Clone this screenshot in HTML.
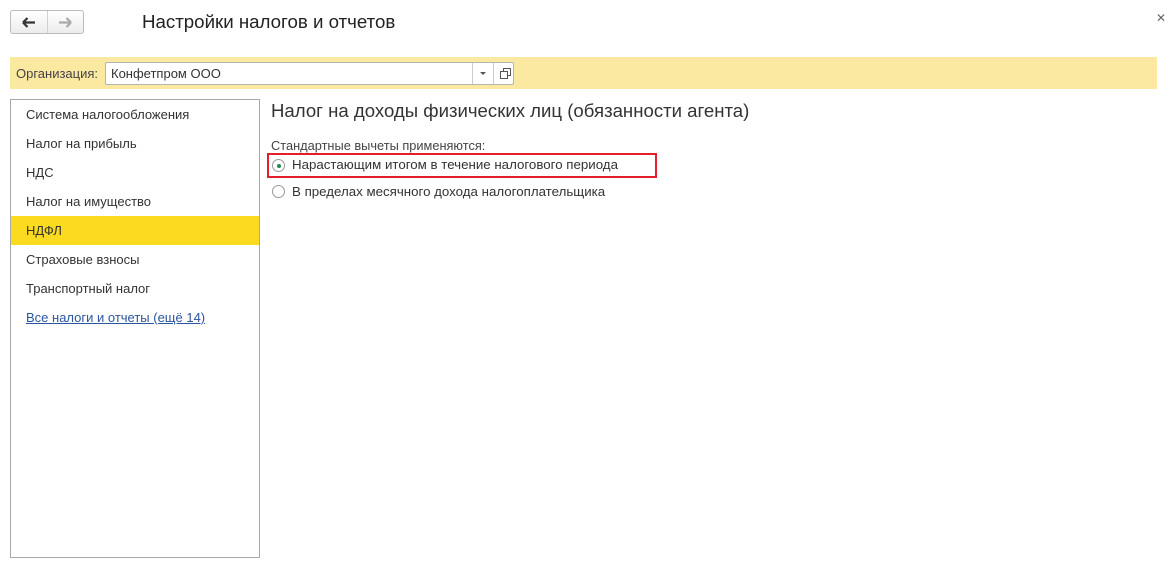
<!DOCTYPE html>
<html><head><meta charset="utf-8"><style>
*{margin:0;padding:0;box-sizing:border-box}
body{width:1171px;height:563px;background:#fff;font-family:"Liberation Sans",Arial,sans-serif;color:#333;position:relative;overflow:hidden;font-size:13px}
.a{position:absolute}
.nav{left:10px;top:10px;width:74px;height:24px;border:1px solid #bcbcbc;border-radius:3px;background:linear-gradient(#fff,#ececec)}
.nav .d{position:absolute;left:36px;top:0;width:1px;height:22px;background:#d0d0d0}
.title{left:142px;top:11px;font-size:18.7px;color:#222}
.close{left:1156px;top:11px;font-size:12px;color:#666}
.bar{left:10px;top:57px;width:1147px;height:32px;background:#fbe8a1}
.lbl{left:16px;top:66px;color:#444}
.combo{left:105px;top:62px;width:409px;height:23px;border:1px solid #b5b5b5;border-radius:2px;background:#fff}
.combo span{position:absolute;left:5px;top:3px;color:#333}
.combo .b1{position:absolute;left:366px;top:0;width:1px;height:21px;background:#ccc}
.combo .b2{position:absolute;left:387px;top:0;width:1px;height:21px;background:#ccc}
.panel{left:10px;top:99px;width:250px;height:459px;border:1px solid #a8a8a8}
.it{position:absolute;left:0;width:248px;height:29px;padding:7px 0 0 15px}
.sel{background:#fadb20}
.link{color:#2a55a0;text-decoration:underline}
.h{left:271px;top:100px;font-size:18.6px;color:#333}
.rad{width:13px;height:13px;border:1px solid #999;border-radius:50%;background:#fff}
.r{font-size:13.3px}
</style></head><body>
<div class="a nav"><div class="d"></div>
<svg class="a" style="left:11px;top:6px" width="14" height="11"><path d="M1 5.5H13M1 5.5L5.5 1M1 5.5L5.5 10" stroke="#333" stroke-width="2.2" fill="none"/></svg>
<svg class="a" style="left:47px;top:6px" width="14" height="11"><path d="M13 5.5H1M13 5.5L8.5 1M13 5.5L8.5 10" stroke="#aaa" stroke-width="2.2" fill="none"/></svg>
</div>
<div class="a title">Настройки налогов и отчетов</div>
<div class="a close">✕</div>
<div class="a bar"></div>
<div class="a lbl">Организация:</div>
<div class="a combo"><span>Конфетпром ООО</span><div class="b1"></div><div class="b2"></div>
<svg class="a" style="left:374px;top:9px" width="6" height="4"><path d="M0 0H6L3 3Z" fill="#555"/></svg>
<svg class="a" style="left:394px;top:5px" width="11" height="11"><rect x="3.5" y="0.5" width="7" height="7" fill="none" stroke="#555"/><rect x="0.5" y="3.5" width="7" height="7" fill="#fff" stroke="#555"/></svg>
</div>
<div class="a panel">
<div class="it" style="top:0">Система налогообложения</div>
<div class="it" style="top:29px">Налог на прибыль</div>
<div class="it" style="top:58px">НДС</div>
<div class="it" style="top:87px">Налог на имущество</div>
<div class="it sel" style="top:116px">НДФЛ</div>
<div class="it" style="top:145px">Страховые взносы</div>
<div class="it" style="top:174px">Транспортный налог</div>
<div class="it" style="top:203px"><span class="link">Все налоги и отчеты (ещё 14)</span></div>
</div>
<div class="a h">Налог на доходы физических лиц (обязанности агента)</div>
<div class="a" style="left:271px;top:138px;color:#444;font-size:12.8px">Стандартные вычеты применяются:</div>
<div class="a" style="left:267px;top:153px;width:390px;height:25px;border:2px solid #e3202a"></div>
<div class="a rad" style="left:272px;top:159px"><div style="position:absolute;left:4px;top:4px;width:4px;height:4px;border-radius:50%;background:#1e8a4a"></div></div>
<div class="a r" style="left:292px;top:157px">Нарастающим итогом в течение налогового периода</div>
<div class="a rad" style="left:272px;top:185px"></div>
<div class="a r" style="left:292px;top:184px">В пределах месячного дохода налогоплательщика</div>
</body></html>
